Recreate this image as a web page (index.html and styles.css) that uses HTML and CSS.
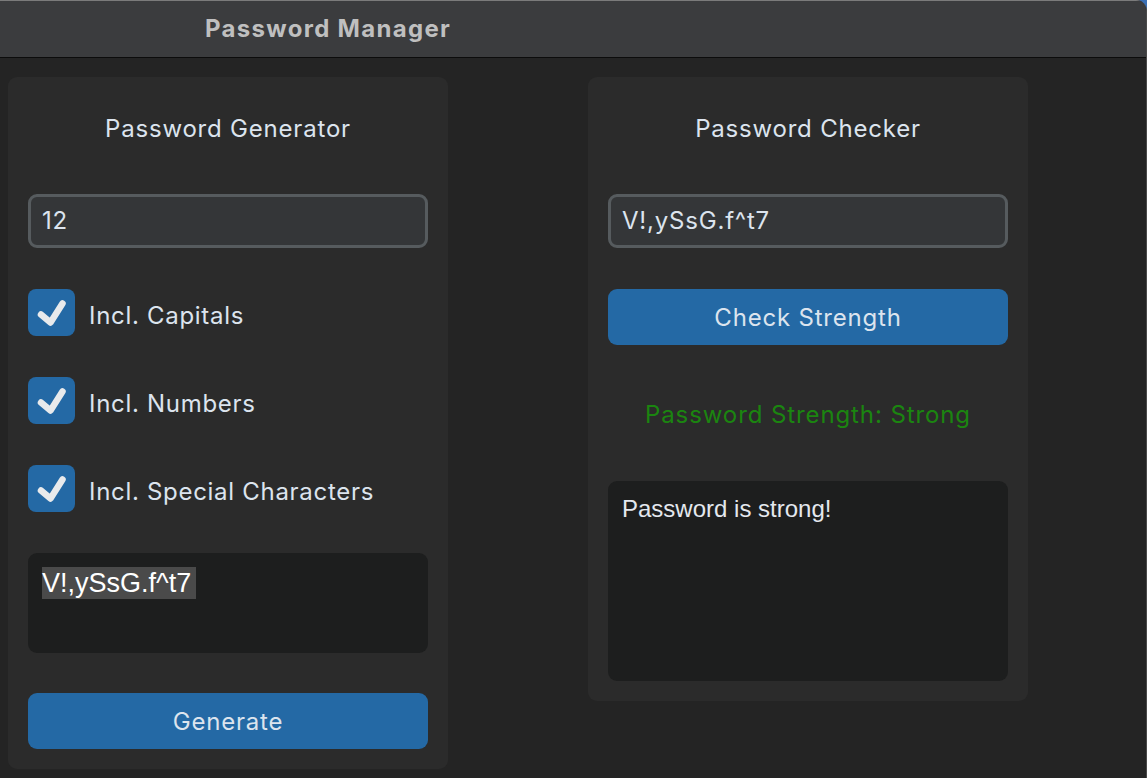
FILE: index.html
```html
<!DOCTYPE html>
<html lang="en">
<head>
<meta charset="utf-8">
<title>Password Manager</title>
<link rel="stylesheet" href="styles.css">
</head>
<body>
<div class="window">
  <header class="titlebar">
    <span class="app-title">Password Manager</span>
  </header>
  <main class="content">
    <section class="panel generator">
      <h2 class="panel-title">Password Generator</h2>
      <div class="entry">12</div>
      <label class="check-row">
        <span class="checkbox"><svg viewBox="0 0 47 47" width="47" height="47"><polyline points="13,25.5 22.5,33.5 34.5,14.5" fill="none" stroke="#e8eaec" stroke-width="6.5" stroke-linecap="round" stroke-linejoin="round"/></svg></span>
        <span class="check-label">Incl. Capitals</span>
      </label>
      <label class="check-row">
        <span class="checkbox"><svg viewBox="0 0 47 47" width="47" height="47"><polyline points="13,25.5 22.5,33.5 34.5,14.5" fill="none" stroke="#e8eaec" stroke-width="6.5" stroke-linecap="round" stroke-linejoin="round"/></svg></span>
        <span class="check-label">Incl. Numbers</span>
      </label>
      <label class="check-row">
        <span class="checkbox"><svg viewBox="0 0 47 47" width="47" height="47"><polyline points="13,25.5 22.5,33.5 34.5,14.5" fill="none" stroke="#e8eaec" stroke-width="6.5" stroke-linecap="round" stroke-linejoin="round"/></svg></span>
        <span class="check-label">Incl. Special Characters</span>
      </label>
      <div class="textbox small"><span class="selected">V!,ySsG.f^t7</span></div>
      <button class="btn gen-btn">Generate</button>
    </section>
    <section class="panel checker">
      <h2 class="panel-title">Password Checker</h2>
      <div class="entry">V!,ySsG.f^t7</div>
      <button class="btn check-btn">Check Strength</button>
      <div class="strength">Password Strength: Strong</div>
      <div class="textbox large">Password is strong!</div>
    </section>
  </main>
</div>
</body>
</html>
```

FILE: styles.css
```css
html, body {
  margin: 0;
  padding: 0;
  background: #3a6fb4;
  width: 1147px;
  height: 778px;
  overflow: hidden;
}

.window {
  width: 1146px;
  height: 778px;
  background: #242424;
  border-top-right-radius: 11px;
  border-right: 1px solid #4a4a4a;
  overflow: hidden;
  display: flex;
  flex-direction: column;
  font-family: "Inter", "Roboto", sans-serif;
}

.titlebar {
  height: 56px;
  background: #3b3c3e;
  border-top: 1px solid #7b7b7b;
  border-bottom: 1px solid #0c0c0c;
  display: flex;
  align-items: center;
  padding-left: 205px;
  box-sizing: content-box;
  flex: none;
}

.app-title {
  font-size: 24px;
  font-weight: 700;
  color: #bfbfbf;
  letter-spacing: 1.3px;
  margin-top: -2px;
}

.content {
  display: flex;
  align-items: flex-start;
  gap: 140px;
  padding: 19px 0 0 8px;
}

.panel {
  width: 400px;
  background: #2b2b2b;
  border-radius: 9px;
  padding: 20px 20px 20px;
  display: flex;
  flex-direction: column;
}

.panel-title {
  margin: 0 0 35px;
  height: 62px;
  line-height: 64px;
  text-align: center;
  font-size: 24px;
  font-weight: 400;
  letter-spacing: 0.8px;
  color: #dce4ee;
}

.entry {
  height: 48px;
  border: 3px solid #565b5e;
  border-radius: 9px;
  background: #343638;
  color: #dce4ee;
  font-size: 24px;
  letter-spacing: 0.8px;
  line-height: 48px;
  padding-left: 11px;
}

.check-row {
  display: flex;
  align-items: center;
  gap: 14px;
  margin-top: 41px;
  height: 47px;
}

.checkbox {
  width: 47px;
  height: 47px;
  border-radius: 8px;
  background: #2469a5;
  display: block;
  flex: none;
}

.checkbox svg {
  display: block;
}

.check-label {
  font-size: 24px;
  letter-spacing: 0.7px;
  color: #dce4ee;
  margin-top: 6px;
}

.textbox {
  background: #1d1e1e;
  border-radius: 9px;
  box-sizing: border-box;
  padding: 14px 14px;
  font-family: "Liberation Sans", Arial, sans-serif;
  color: #e4e8ee;
}

.textbox.small {
  height: 100px;
  margin-top: 41px;
  font-size: 27px;
  line-height: 32px;
}

.textbox.large {
  height: 200px;
  margin-top: 39px;
  font-size: 24px;
  line-height: 28px;
}

.selected {
  background: #4a4a4a;
  color: #ffffff;
  display: inline-block;
  line-height: 32px;
  padding-right: 5px;
}

.btn {
  height: 56px;
  border: none;
  border-radius: 9px;
  background: #2469a5;
  color: #dce4ee;
  font-family: "Inter", "Roboto", sans-serif;
  font-size: 24px;
  letter-spacing: 0.8px;
  padding: 0;
  width: 100%;
}

.gen-btn {
  margin-top: 40px;
}

.check-btn {
  margin-top: 41px;
}

.strength {
  margin-top: 41px;
  height: 56px;
  line-height: 58px;
  text-align: center;
  font-size: 24px;
  letter-spacing: 0.9px;
  color: #1b8510;
}
```
